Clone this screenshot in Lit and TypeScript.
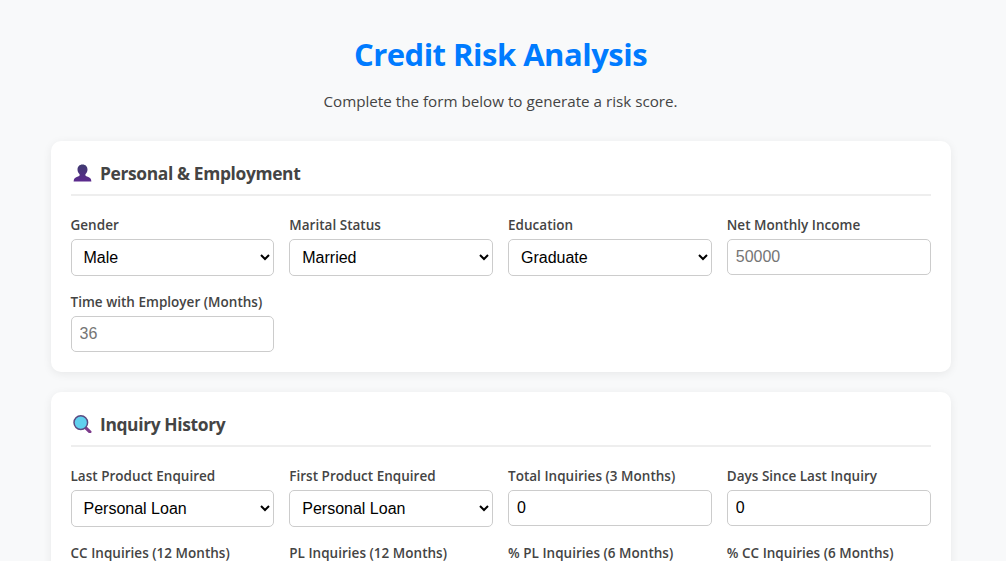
import { LitElement, html, css, svg } from "lit";
import { customElement } from "lit/decorators.js";

type Field = { label: string; kind: "select" | "input"; value?: string; placeholder?: string; options?: string[] };

const personIcon = svg`<defs><linearGradient id="pg" x1="0" y1="0" x2="0" y2="1"><stop offset="0" stop-color="#3e3a70"/><stop offset="1" stop-color="#5c2a8e"/></linearGradient></defs>
<path fill="url(#pg)" d="M9.5 0.5c3.2 0 5 2.2 5 5 0 2-.9 3.6-2.1 4.7v1c0 .6 1 1 2.4 1.5 2.1.8 3.4 1.7 3.6 4.8H.6c.2-3.1 1.5-4 3.6-4.8 1.4-.5 2.4-.9 2.4-1.5v-1C5.4 9.1 4.5 7.5 4.5 5.5c0-2.8 1.8-5 5-5z"/>`;

const searchIcon = svg`<path d="M12.2 12.4l4.7 4.4" stroke="#7d3c8c" stroke-width="3.2" stroke-linecap="round"/>
<circle cx="7.8" cy="7.6" r="6.8" fill="#5fd0ee" stroke="#5a4a82" stroke-width="1.5"/>`;

const personal: Field[] = [
  { label: "Gender", kind: "select", options: ["Male", "Female"] },
  { label: "Marital Status", kind: "select", options: ["Married", "Single"] },
  { label: "Education", kind: "select", options: ["Graduate", "Post-Graduate"] },
  { label: "Net Monthly Income", kind: "input", placeholder: "50000" },
  { label: "Time with Employer (Months)", kind: "input", placeholder: "36" },
];
const inquiry: Field[] = [
  { label: "Last Product Enquired", kind: "select", options: ["Personal Loan", "Credit Card"] },
  { label: "First Product Enquired", kind: "select", options: ["Personal Loan", "Credit Card"] },
  { label: "Total Inquiries (3 Months)", kind: "input", value: "0" },
  { label: "Days Since Last Inquiry", kind: "input", value: "0" },
  { label: "CC Inquiries (12 Months)", kind: "input", value: "0" },
  { label: "PL Inquiries (12 Months)", kind: "input", value: "0" },
  { label: "% PL Inquiries (6 Months)", kind: "input", value: "0" },
  { label: "% CC Inquiries (6 Months)", kind: "input", value: "0" },
];

@customElement("app-root")
export class AppRoot extends LitElement {
  static styles = css`
    :host {
      display: block;
      height: 561px;
      overflow: hidden;
      padding-right: 5px;
      background: #f8f9fa;
      font-family: "Open Sans", "Noto Sans", sans-serif;
      color: #444;
    }
    .container {
      width: 900px;
      margin: 0 auto;
      padding: 20px 0;
    }
    header {
      text-align: center;
      margin-bottom: 29px;
    }
    h1 {
      margin: 13px 0 0;
      font-size: 31px;
      line-height: 42px;
      font-weight: 700;
      color: #007bff;
      letter-spacing: -0.5px;
    }
    header p {
      margin: 16px 0 0;
      font-size: 15.2px;
      line-height: 21px;
    }
    .card {
      background: #fff;
      border-radius: 10px;
      padding: 20px;
      margin-bottom: 20px;
      box-shadow: 0 2px 10px rgba(0, 0, 0, 0.07);
    }
    h2 {
      display: flex;
      align-items: center;
      gap: 8px;
      margin: 0 0 20px;
      padding-bottom: 9px;
      height: 24px;
      font-size: 17.4px;
      line-height: 24px;
      font-weight: 700;
      letter-spacing: -0.36px;
      border-bottom: 2px solid #eee;
    }
    h2 svg {
      width: 19px;
      height: 18px;
      flex: none;
      margin-left: 2.5px;
    }
    .grid {
      display: grid;
      grid-template-columns: repeat(4, 1fr);
      gap: 17px 15px;
      align-items: start;
    }
    label {
      display: block;
      margin-bottom: 5px;
      font-size: 13.5px;
      line-height: 18px;
      font-weight: 600;
      letter-spacing: 0.02px;
    }
    select,
    input {
      display: block;
      box-sizing: border-box;
      width: 100%;
      border: 1px solid #ccc;
      border-radius: 5px;
      padding: 8px;
      font-family: "Liberation Sans", Arial, sans-serif;
      font-size: 16px;
      line-height: 18px;
      color: #000;
      background: #fff;
    }
    select {
      height: 37px;
    }
    input {
      height: 36px;
    }
    input::placeholder {
      color: #757575;
    }
  `;

  private field(f: Field) {
    return html`<div>
      <label>${f.label}</label>
      ${f.kind === "select"
        ? html`<select>${f.options!.map((o) => html`<option>${o}</option>`)}</select>`
        : html`<input type="number" .value=${f.value ?? ""} placeholder=${f.placeholder ?? ""} />`}
    </div>`;
  }

  render() {
    return html`<div class="container">
      <header>
        <h1>Credit Risk Analysis</h1>
        <p>Complete the form below to generate a risk score.</p>
      </header>
      <section class="card">
        <h2><svg viewBox="0 0 19 18">${personIcon}</svg>Personal &amp; Employment</h2>
        <div class="grid">${personal.map((f) => this.field(f))}</div>
      </section>
      <section class="card">
        <h2><svg viewBox="0 0 19 18">${searchIcon}</svg>Inquiry History</h2>
        <div class="grid">${inquiry.map((f) => this.field(f))}</div>
      </section>
    </div>`;
  }
}
